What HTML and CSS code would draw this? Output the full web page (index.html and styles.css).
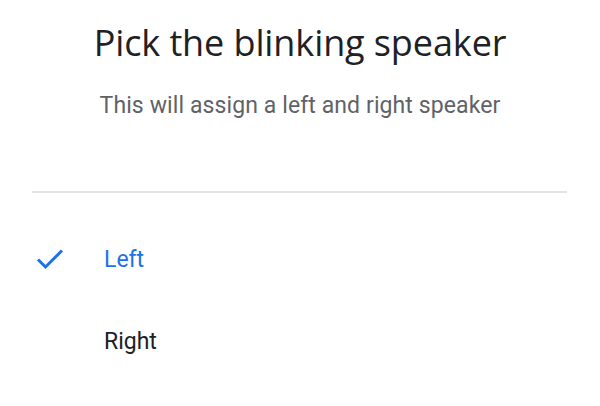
FILE: index.html
```html
<!DOCTYPE html>
<html>
<head>
<meta charset="utf-8">
<link rel="stylesheet" href="styles.css">
</head>
<body>
<div class="page">
  <header class="head">
    <h1 class="title">Pick the blinking speaker</h1>
    <p class="subtitle">This will assign a left and right speaker</p>
  </header>
  <hr class="divider">
  <ul class="options">
    <li class="option selected">
      <span class="check">
        <svg width="28" height="22" viewBox="0 0 28 22"><path d="M2 11.5 L9.5 19 L26 2.5" fill="none" stroke="#1a73e8" stroke-width="3"/></svg>
      </span>
      <span class="label">Left</span>
    </li>
    <li class="option">
      <span class="check"></span>
      <span class="label">Right</span>
    </li>
  </ul>
</div>
</body>
</html>
```
FILE: styles.css
```css
* { box-sizing: border-box; }
html, body { margin: 0; padding: 0; background: #fff; }
.page { width: 600px; height: 406px; overflow: hidden; }
.head { display: flex; flex-direction: column; align-items: center; padding-top: 21px; }
.title {
  margin: 0;
  font-family: "Open Sans", sans-serif;
  font-weight: 400;
  font-size: 36px;
  line-height: 44px;
  color: #202124;
  letter-spacing: -0.1px;
}
.subtitle {
  margin: 27px 0 0;
  font-family: Roboto, sans-serif;
  font-size: 23px;
  line-height: 28px;
  color: #5f6368;
  letter-spacing: 0.1px;
}
.divider {
  margin: 71px 33px 0 32px;
  border: 0;
  height: 2px;
  background: #e3e3e3;
}
.options { list-style: none; margin: 0; padding: 0; }
.option {
  display: flex;
  align-items: center;
  height: 82px;
  font-family: Roboto, sans-serif;
  font-size: 23px;
  color: #202124;
}
.options .option:first-child { margin-top: 25px; }
.check { width: 104px; display: flex; padding-left: 36px; }
.selected .label { color: #1a73e8; }
```
